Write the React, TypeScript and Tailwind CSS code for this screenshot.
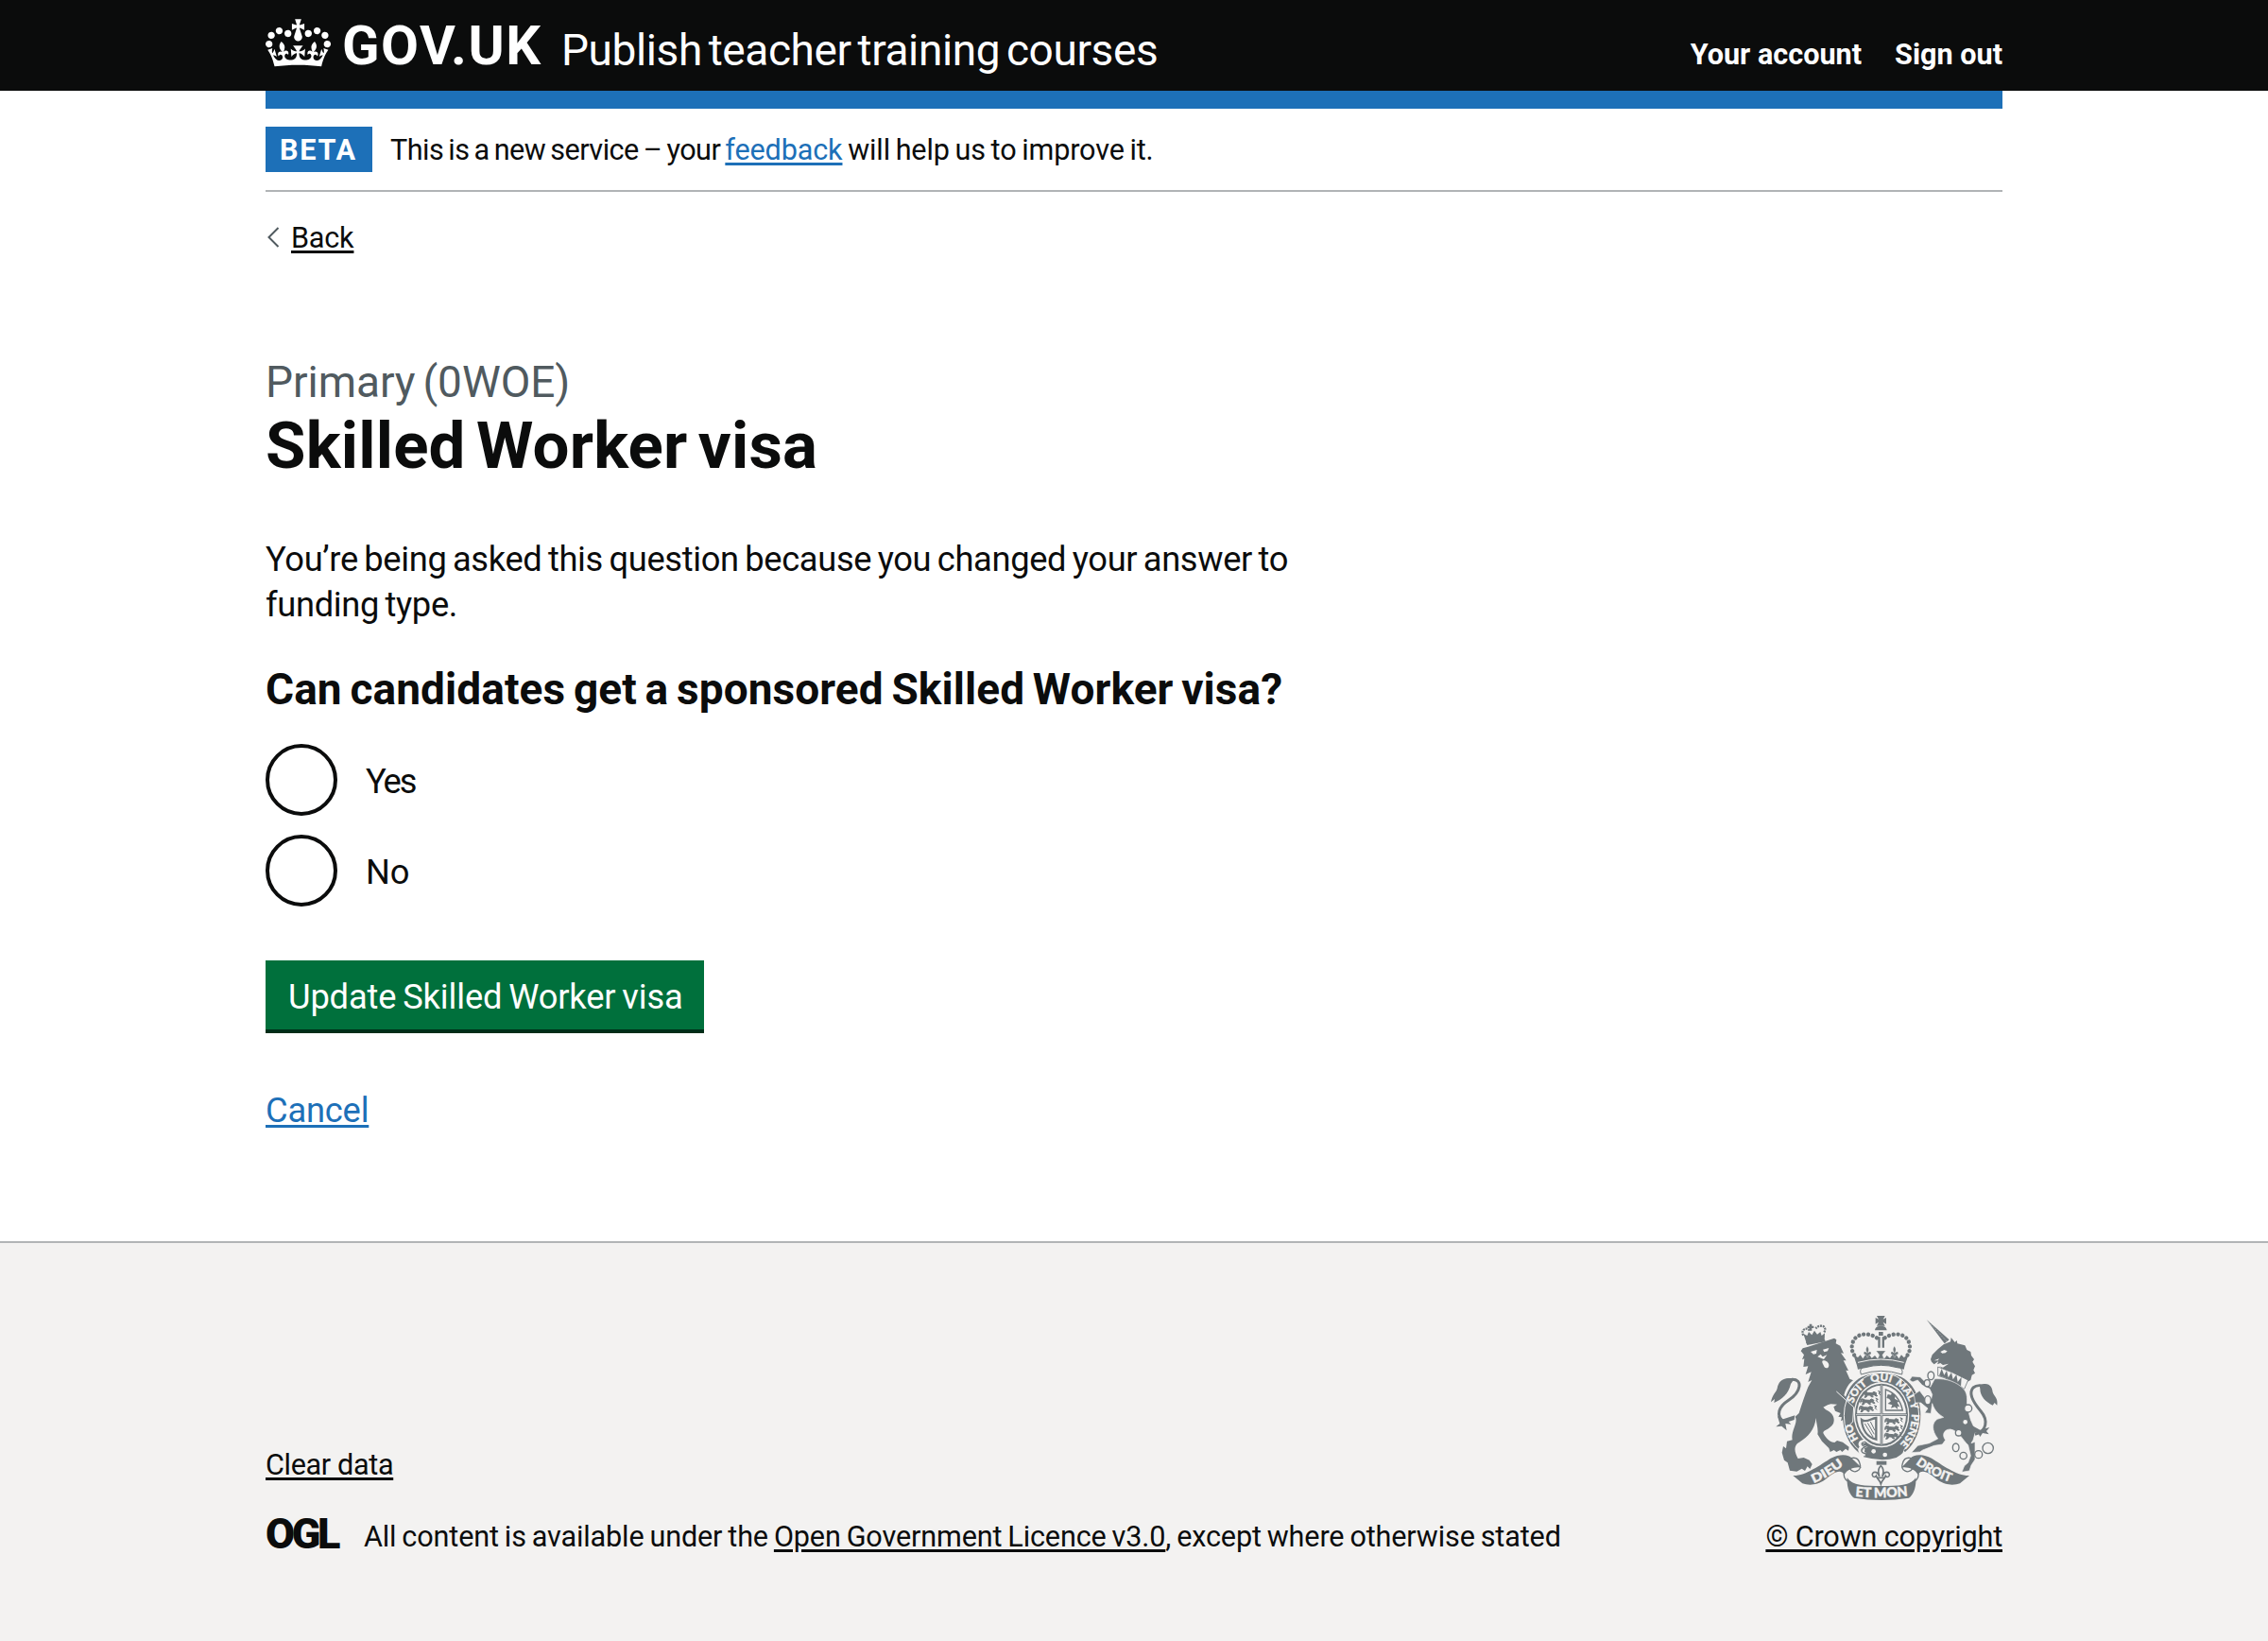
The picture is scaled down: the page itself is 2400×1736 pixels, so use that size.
import type { ReactNode } from "react";

const SLATE = "#6f777b";
const PAPER = "#f3f2f1";

function Crown() {
  return (
    <svg viewBox="0 0 132 97" className="mt-5 h-[51px] w-[69px] shrink-0" fill="currentColor" aria-hidden="true">
      <path d="M25 30.2c3.5 1.5 7.7-.2 9.1-3.7 1.5-3.6-.2-7.8-3.9-9.2-3.6-1.4-7.6.3-9.1 3.9-1.4 3.5.3 7.5 3.9 9zM9 39.5c3.6 1.5 7.8-.2 9.2-3.7 1.5-3.6-.2-7.8-3.9-9.1-3.6-1.5-7.6.2-9.1 3.8-1.4 3.5.3 7.5 3.8 9zM4.4 57.2c3.5 1.5 7.7-.2 9.1-3.8 1.5-3.6-.2-7.7-3.9-9.1-3.5-1.5-7.6.3-9.1 3.8-1.4 3.5.3 7.6 3.9 9.1zm38.3-21.4c3.5 1.5 7.7-.2 9.1-3.8 1.5-3.6-.2-7.7-3.9-9.1-3.6-1.5-7.6.3-9.1 3.8-1.3 3.6.4 7.7 3.9 9.1zm64.4-5.6c-3.6 1.5-7.8-.2-9.1-3.7-1.5-3.6.2-7.8 3.8-9.2 3.6-1.4 7.7.3 9.2 3.9 1.3 3.5-.4 7.5-3.9 9zm15.9 9.3c-3.6 1.5-7.7-.2-9.1-3.7-1.5-3.6.2-7.8 3.7-9.1 3.6-1.5 7.7.2 9.2 3.8 1.5 3.5-.3 7.5-3.8 9zm4.7 17.7c-3.6 1.5-7.8-.2-9.2-3.8-1.5-3.6.2-7.7 3.9-9.1 3.6-1.5 7.7.3 9.2 3.8 1.3 3.5-.4 7.6-3.9 9.1zM89.3 35.8c-3.6 1.5-7.8-.2-9.2-3.8-1.4-3.6.2-7.7 3.9-9.1 3.6-1.5 7.7.3 9.2 3.8 1.4 3.6-.3 7.7-3.9 9.1zM69.7 17.7l8.9 4.7V9.3l-8.9 2.8c-.2-.3-.5-.6-.9-.9L72.4 0H59.6l3.5 11.2c-.3.3-.6.5-.9.9l-8.8-2.8v13.1l8.8-4.7c.3.3.6.7.9.9l-5 15.4v.1c-.2.8-.4 1.6-.4 2.4 0 4.1 3.1 7.5 7 8.1h.2c.3 0 .7.1 1 .1.4 0 .7 0 1-.1h.2c4-.6 7.1-4.1 7.1-8.1 0-.8-.1-1.7-.4-2.4V34l-5.1-15.4c.4-.2.7-.6 1-.9zM66 92.8c16.9 0 32.8 1.1 47.1 3.2 4-16.9 8.9-26.7 14-33.5l-9.6-3.4c1 4.9 1.1 7.2 0 10.2-1.5-1.4-3-4.3-4.2-8.7L108.6 76c2.8-2 5-3.2 7.5-3.3-4.4 9.4-10 11.9-13.6 11.2-4.3-.8-6.3-4.6-5.6-7.9 1-4.7 5.7-5.9 8-.5 4.3-8.7-3-11.4-7.6-8.8 7.1-7.2 7.9-13.5 2.1-21.1-8 6.1-8.1 12.3-4.5 20.8-4.7-5.4-12.1-2.5-9.5 6.2 3.4-5.2 7.9-2 7.2 3.1-.6 4.3-6.4 7.8-13.5 7.2-10.3-.9-10.9-8-11.2-13.8 2.5-.5 7.1 1.8 11 7.3L80.2 60c-4.1 4.4-8 5.3-12.3 5.4 1.4-4.4 8-11.6 8-11.6H55.5s6.4 7.2 7.9 11.6c-4.2-.1-8-1-12.3-5.4l1.4 16.4c3.9-5.5 8.5-7.7 10.9-7.3-.3 5.8-.9 12.8-11.1 13.8-7.2.6-12.9-2.9-13.5-7.2-.7-5 3.8-8.3 7.1-3.1 2.7-8.7-4.6-11.6-9.4-6.2 3.7-8.5 3.6-14.7-4.6-20.8-5.8 7.6-5 13.9 2.2 21.1-4.7-2.6-11.9.1-7.7 8.8 2.3-5.5 7.1-4.2 8.1.5.7 3.3-1.3 7.1-5.7 7.9-3.5.7-9-1.8-13.5-11.2 2.5.1 4.7 1.3 7.5 3.3l-4.7-15.4c-1.2 4.4-2.7 7.2-4.3 8.7-1.1-3-.9-5.3 0-10.2l-9.5 3.4c5 6.9 9.9 16.7 14 33.5 14.8-2.1 30.8-3.2 47.7-3.2z" />
    </svg>
  );
}

/* A lion passant, repeated in the English quarters of the shield. */
function SmallLion({ x, y }: { x: number; y: number }) {
  return (
    <path
      transform={`translate(${x} ${y})`}
      d="M0 4l6-3 5 3 14 1 6-4 8 4-2 4 5 5-4 1-6-4-8 1 5 5-5 1-6-6-8 0-3 6-6 1 3-6-2-5-6 1zM4 1C-6 -2 -2 12 -4 14M44 -2l8 4-6 4 6 6"
      fill={SLATE}
      stroke={SLATE}
      strokeWidth="3"
    />
  );
}

function RoyalCrest() {
  return (
    <svg viewBox="42 33 723 591" className="h-[197px] w-[241px]" fill={SLATE} aria-hidden="true">
      <defs>
        <path id="garter" d="M391 466A96 112 0 0 1 297 354A96 112 0 0 1 393 242A96 112 0 0 1 489 354A96 112 0 0 1 395 466" />
        <path id="ribbonLeft" d="M178 567Q228 546 274 509" />
        <path id="ribbonRight" d="M501 506Q550 543 612 564" />
        <path id="ribbonBase" d="M310 609Q391 617 478 607" />
      </defs>

      {/* Lion's crown */}
      <g>
        <path d="M164 62h8v6h6v7h-6v8h-8v-8h-6v-7h6z" />
        <path d="M153 117l-8-24 12 6 5-12 10 10 8-14 9 12 10-8 4 12 10-8-1 22-58 11z" />
        <path d="M154 121l59-10 2 7-58 11z" />
        <path d="M145 98C136 82 152 70 165 82M211 88C222 70 200 60 184 76" fill="none" stroke={SLATE} strokeWidth="7" strokeDasharray="6 2.5" />
      </g>

      {/* Lion */}
      <path d="M137 148L143 139L160 134L243 107L250 112L248 124L262 131L273 155L264 154L281 178L272 178L288 210L280 209L292 236L303 241C290 250 280 266 274 288L303 318L303 340L299 366L292 378L288 366L281 376L276 364L264 370L267 358L256 356L263 345L246 338L241 325L252 317L232 316L222 319L208 326L216 334C236 342 247 360 240 378C228 398 207 398 208 408C216 424 230 438 244 438L252 432L270 437L290 452L288 464L279 458L268 468L262 462L250 468L242 462L230 468L226 456L204 434L190 412C193 395 186 378 185 360C180 400 160 420 126 441C112 456 120 474 128 489L146 486L164 494L173 507L166 522L158 514L150 528L140 521L124 530L102 527L95 502L84 494L77 470L81 450L90 457L93 434L110 430C104 402 130 374 119 356L131 345C142 312 150 286 160 262L172 240L160 246L170 214L152 222L160 196L145 198L148 172L141 175L147 160Z" />
      <path d="M168 150L188 144L186 156L177 158ZM207 143L226 138L222 148L211 151Z" fill={PAPER} />
      <path d="M207 178C216 176 227 184 226 194C225 204 213 204 210 195C207 188 202 182 207 178ZM190 166l10-8 6 8 14-6-10 14z" fill={PAPER} />
      <path d="M86 374C52 352 70 322 98 304C138 278 145 236 108 238C96 238 88 242 80 250" fill="none" stroke={SLATE} strokeWidth="9" strokeLinecap="round" />
      <path d="M116 236C78 228 66 246 62 266C58 280 46 286 42 310L54 300L52 312C76 302 98 284 105 252Z" />
      <path d="M62 352L74 366L118 352L116 366L98 372L106 380L88 378L92 400L76 386L58 388L70 378Z" />

      {/* Imperial crown */}
      <path d="M378 36h26l-6 11 10-5v20l-10-6 6 12h-26l6-12-10 6V42l10 5z" />
      <path d="M372 82C374 70 382 68 391 68C400 68 408 70 410 82ZM384 87h14v12h-14zM382 103h7v34h-7zM395 103h7v34h-7z" />
      <path d="M378 106C354 88 312 90 302 120C296 138 299 150 310 166M404 106C428 88 470 90 480 120C486 138 483 150 472 166" fill="none" stroke={SLATE} strokeWidth="13" strokeDasharray="0.1 14.5" strokeLinecap="round" />
      <path d="M305 160L318 168L326 160L334 172L348 150L362 170L372 162L380 172L391 160L402 172L410 162L420 170L434 150L448 172L456 160L464 168L478 160C474 176 468 186 464 206Q391 184 318 206C314 186 308 176 305 160Z" />
      <path d="M318 184Q391 164 464 184" fill="none" stroke={PAPER} strokeWidth="3" />
      <path d="M376 147h30l-10 13 4 12h-18l4-12zM348 132C340 144 346 148 347 154C340 146 334 150 338 158L345 160L347 168H350L352 160L359 158C363 150 356 146 350 154C351 148 356 144 348 132ZM434 132C426 144 432 148 433 154C426 146 420 150 424 158L431 160L433 168H436L438 160L445 158C449 150 442 146 436 154C437 148 442 144 434 132Z" stroke={PAPER} strokeWidth="1" />

      {/* Garter */}
      <path d="M330 230Q391 205 456 230C500 252 517 305 517 352C517 430 470 494 393 494C316 494 270 430 270 352C270 305 286 252 330 230Z" />
      <ellipse cx="393" cy="353" rx="119" ry="136" fill="none" stroke={PAPER} strokeWidth="3" />
      <path d="M328 222Q320 200 342 200Q391 186 442 200Q464 200 458 222Q391 200 328 222Z" fill={PAPER} stroke={SLATE} strokeWidth="3" />
      <ellipse cx="393" cy="350" rx="88" ry="104" fill={PAPER} />
      <ellipse cx="393" cy="350" rx="84" ry="99" fill={SLATE} />
      <ellipse cx="393" cy="350" rx="78" ry="93" fill={PAPER} />
      <g fontFamily="Lato, sans-serif" fontWeight="900" fontSize="33" fill={PAPER} stroke={PAPER} strokeWidth="1.2">
        <text><textPath href="#garter" startOffset="84" textLength="54" lengthAdjust="spacingAndGlyphs">HO</textPath></text>
        <text><textPath href="#garter" startOffset="202" textLength="76" lengthAdjust="spacingAndGlyphs">SOIT</textPath></text>
        <text><textPath href="#garter" startOffset="292" textLength="64" lengthAdjust="spacingAndGlyphs">QUI</textPath></text>
        <text><textPath href="#garter" startOffset="370" textLength="98" lengthAdjust="spacingAndGlyphs">MAL Y</textPath></text>
        <text><textPath href="#garter" startOffset="482" textLength="106" lengthAdjust="spacingAndGlyphs">PENSE</textPath></text>
      </g>

      {/* Quarters of the shield */}
      <SmallLion x={338} y={276} />
      <SmallLion x={330} y={299} />
      <SmallLion x={326} y={322} />
      <SmallLion x={408} y={361} />
      <SmallLion x={408} y={385} />
      <SmallLion x={406} y={408} />
      <path d="M406 270Q448 284 460 336H406Z" fill="none" stroke={SLATE} strokeWidth="4" />
      <path d="M413 285l10 2 4-8 10 10-2 10 14 8-6 4 8 14-8-2 2 10-10-8-12 4 4-10-14-4 10-8-6-8-8-2z" />
      <path d="M330 366C346 378 360 360 376 360V428C350 422 332 400 330 366Z" fill="none" stroke={SLATE} strokeWidth="7" />
      <path d="M340 378L366 420M349 376L370 412M358 372L372 400" stroke={SLATE} strokeWidth="3" />
      <path d="M393 254V446M312 350H474" stroke={SLATE} strokeWidth="8" />
      <path d="M393 254V446M312 350H474" stroke={PAPER} strokeWidth="2" />

      {/* Buckle and strap */}
      <path d="M336 456Q393 500 462 462L482 484Q400 520 328 480Z" fill={PAPER} />
      <path d="M342 448Q398 482 462 456Q470 470 440 486Q396 500 336 484Z" />
      <path d="M340 434C320 436 324 448 334 452C320 458 322 470 342 476" fill="none" stroke={PAPER} strokeWidth="12" />
      <path d="M340 436C326 438 328 448 342 452C324 458 326 470 344 474" fill="none" stroke={SLATE} strokeWidth="4" />
      <circle cx="368" cy="466" r="7" fill={PAPER} />
      <circle cx="404" cy="477" r="7" fill={PAPER} />

      {/* Edge of the lion's forearm */}
      <path d="M250 276L305 326L302 372L292 382" fill="none" stroke={PAPER} strokeWidth="3" />

      {/* Unicorn */}
      <path d="M536 48L608 112L593 124Z" />
      <path d="M536 48L601 118" stroke={PAPER} strokeWidth="1.5" strokeDasharray="3 4" />
      <path d="M549 174L554 160L572 142L590 127L612 118L614 105L626 120L632 114L634 124L658 130L664 144L676 150L678 162L687 174L682 182L690 196L685 208L690 218L680 224L676 240L664 246L640 232L600 212L576 196L588 200L606 188L588 192L580 186L570 190L574 180L560 190L552 182Z" />
      <path d="M580 150l12-6 10 4-6 6-10 1zM560 178l16-6-4 6z" fill={PAPER} />
      <path d="M572 198Q620 214 668 240L656 268Q610 236 572 226Z" fill={PAPER} stroke={SLATE} strokeWidth="2.5" />
      <path d="M576 226l8-22 8 20 8-14 5 22 10-16 5 22 11-16 4 24 12-16-2 32Q610 236 576 226Z" />
      <path d="M562 236C600 234 632 246 654 268C672 290 660 312 667 332L676 366L692 402L684 430L678 440L690 436L690 492L678 510L672 528L648 532L656 512L668 502L676 480L668 446C650 430 640 402 612 396C590 396 584 416 596 430L586 444L560 448L524 462L515 468L488 470L508 448L545 440L572 426C552 400 552 376 570 364L590 358C578 350 562 340 554 314L550 346L530 344L540 330L518 312L500 312L496 286L514 274L534 300L550 304L554 286L546 268L522 256L508 240L492 246L482 240L490 228L516 230L548 262Z" stroke={PAPER} strokeWidth="2" />
      <path d="M690 412C728 404 732 366 708 338C682 308 668 282 684 264C696 254 714 256 728 264" fill="none" stroke={SLATE} strokeWidth="9" />
      <path d="M704 256C736 244 744 262 746 278C750 292 764 296 760 320L752 312L746 320C724 310 706 292 706 268Z" />
      <path d="M680 384L706 398L736 390L726 402L734 412L714 408L706 420L700 408L682 406Z" />
      <g fill={PAPER} stroke={SLATE} strokeWidth="4">
        <ellipse cx="550" cy="226" rx="10" ry="13" />
        <ellipse cx="538" cy="250" rx="9" ry="11" />
        <ellipse cx="540" cy="304" rx="10" ry="14" />
        <circle cx="668" cy="330" r="12" />
        <circle cx="659" cy="373" r="9" />
        <circle cx="638" cy="407" r="10" />
        <ellipse cx="629" cy="454" rx="10" ry="13" />
        <circle cx="653" cy="480" r="11" />
        <circle cx="701" cy="476" r="12" />
        <circle cx="731" cy="456" r="17" />
      </g>

      {/* Motto ribbon */}
      <path d="M112 543C150 545 200 508 232 488C262 472 290 476 299 488L330 518C310 514 286 522 275 540C262 518 236 538 214 556C186 576 160 574 142 568Z" />
      <path d="M672 543C634 545 584 508 552 488C522 472 494 476 485 488L456 518C474 514 498 522 509 540C522 518 548 538 570 556C598 576 624 574 642 568Z" />
      <path d="M296 488Q318 482 324 504C332 528 304 540 292 520C270 520 262 556 300 568M488 488Q466 482 460 504C452 528 480 540 492 520C514 520 522 556 484 568" fill="none" stroke={SLATE} strokeWidth="4" />
      <path d="M284 550C300 576 340 576 393 576C446 576 486 576 502 550C504 580 494 606 480 614Q393 628 306 614C292 606 282 580 284 550Z" />
      <g fontFamily="Lato, sans-serif" fontWeight="900" fontSize="43" fill={PAPER} stroke={PAPER} strokeWidth="1.2">
        <text fontSize="39"><textPath href="#ribbonLeft" startOffset="0" textLength="112" lengthAdjust="spacingAndGlyphs">DIEU</textPath></text>
        <text fontSize="39"><textPath href="#ribbonRight" startOffset="0" textLength="124" lengthAdjust="spacingAndGlyphs">DROIT</textPath></text>
        <text><textPath href="#ribbonBase" startOffset="0" textLength="167" lengthAdjust="spacingAndGlyphs">ET MON</textPath></text>
      </g>

      {/* Fleur-de-lis */}
      <path d="M377 497h32v12h-32z" />
      <path d="M391 512C376 526 386 536 386 546C380 526 362 530 364 542C366 550 374 548 376 544C380 556 386 554 391 570C396 554 402 556 406 544C408 548 416 550 418 542C420 530 402 526 396 546C396 536 406 526 391 512Z" fill={PAPER} stroke={SLATE} strokeWidth="5" />
      <path d="M378 550h26" stroke={SLATE} strokeWidth="5" />
    </svg>
  );
}

function Link({ className, children }: { className: string; children: ReactNode }) {
  return (
    <a href="#" className={`underline decoration-[3px] underline-offset-[3px] ${className}`}>
      {children}
    </a>
  );
}

function Radio({ label, className }: { label: string; className: string }) {
  return (
    <label className="flex h-[76px] items-center gap-[30px]">
      <input type="radio" name="visa" className="size-[76px] appearance-none rounded-full border-4 border-[#0b0c0c]" />
      <span className={`pt-[3px] text-[36.3px] leading-[48px] ${className}`}>{label}</span>
    </label>
  );
}

export default function App() {
  return (
    <div className="flex h-[1736px] w-[2400px] flex-col overflow-hidden bg-white font-['Roboto',sans-serif] text-[#0b0c0c]">
      <header className="h-24 bg-[#0b0c0c] text-white">
        <div className="mx-auto flex w-[1838px] items-start whitespace-nowrap">
          <Crown />
          <span className="mt-[19px] ml-3 w-[232px] text-[58px] leading-[58px] font-bold tracking-[1.5px]">GOV.UK</span>
          <span className="mt-6 text-[46px] leading-[58px] tracking-[-0.4px] [word-spacing:-4.2px]">
            Publish teacher training courses
          </span>
          <nav className="mt-[38px] ml-auto flex gap-[35px] text-[30.6px] leading-10 font-bold">
            <a href="#">Your account</a>
            <a href="#">Sign out</a>
          </nav>
        </div>
      </header>

      <div className="mx-auto w-[1838px]">
        <div className="h-[19px] bg-[#1d70b8]" />
        <div className="flex items-center border-b-2 border-[#b1b4b6] py-[19px] text-[30.6px]">
          <strong className="h-12 w-[113px] bg-[#1d70b8] pt-px pl-[15px] leading-[48px] font-bold tracking-[1.7px] text-white">
            BETA
          </strong>
          <span className="ml-[19px] h-12 pt-px leading-[48px]">
            <span className="tracking-[-0.55px] [word-spacing:-1.9px]">This is a new service – your </span>
            <span className="tracking-[-0.15px] [word-spacing:-1.7px]">
              <Link className="text-[#1d70b8]">feedback</Link> will help us to improve it.
            </span>
          </span>
        </div>

        <a href="#" className="mt-[28px] flex h-10 items-center text-[30.6px] leading-10">
          <svg viewBox="0 0 14 22" className="ml-px h-[22px] w-[14px]" fill="none" stroke="#505a5f" strokeWidth="2">
            <path d="M12.5 1 2.5 11l10 10" />
          </svg>
          <span className="ml-3 pt-px tracking-[-0.2px] underline decoration-[3px] underline-offset-[3px]">Back</span>
        </a>

        <main className="flex w-[1225px] flex-col items-start pt-[105px]">
          <span className="text-[46px] leading-[56px] tracking-[-0.05px] text-[#505a5f] [word-spacing:-3.5px]">
            Primary (0WOE)
          </span>
          <h1 className="mt-1 text-[69px] leading-[72px] font-bold tracking-[0.2px] [word-spacing:-6px]">Skilled Worker visa</h1>
          <p className="mt-[60px] text-[36.3px] leading-[48px] tracking-[-0.34px] [word-spacing:-2.2px]">
            You’re being asked this question because you changed your answer to
            <br />
            funding type.
          </p>
          <h2 className="mt-[37px] text-[46px] leading-[56px] font-bold tracking-[0.08px] [word-spacing:-2.8px]">
            Can candidates get a sponsored Skilled Worker visa?
          </h2>
          <div className="mt-[30px] flex flex-col gap-5">
            <Radio label="Yes" className="tracking-[-2.1px]" />
            <Radio label="No" className="tracking-[-0.2px]" />
          </div>
          <button
            type="button"
            className="mt-[57px] h-[73px] w-[464px] bg-[#00703c] pt-[5px] pl-6 text-left text-[36.3px] tracking-[-0.15px] whitespace-nowrap text-white shadow-[0_4px_0_#002d18] [word-spacing:-2px]"
          >
            Update Skilled Worker visa
          </button>
          <div className="mt-[62px] text-[36.3px] leading-[48px] tracking-[-0.2px]">
            <Link className="text-[#1d70b8]">Cancel</Link>
          </div>
        </main>
      </div>

      <footer className="mt-[114px] grow border-t-2 border-[#b1b4b6] bg-[#f3f2f1] text-[30.6px] leading-10">
        <div className="mx-auto flex w-[1838px] justify-between">
          <div className="pt-[215px]">
            <div className="tracking-[-0.35px]">
              <Link className="">Clear data</Link>
            </div>
            <div className="mt-9 flex items-center">
              <span className="h-10 w-[104px] text-[45px] leading-[34px] font-black tracking-[-3.4px]">OGL</span>
              <span className="tracking-[-0.14px] [word-spacing:-1.5px]">
                All content is available under the <Link className="">Open Government Licence v3.0</Link>, except where
                otherwise stated
              </span>
            </div>
          </div>
          <div className="flex flex-col items-end pt-[76px]">
            <div className="pr-1">
              <RoyalCrest />
            </div>
            <div className="mt-[18px] tracking-[-0.16px]">
              <Link className="">© Crown copyright</Link>
            </div>
          </div>
        </div>
      </footer>
    </div>
  );
}
